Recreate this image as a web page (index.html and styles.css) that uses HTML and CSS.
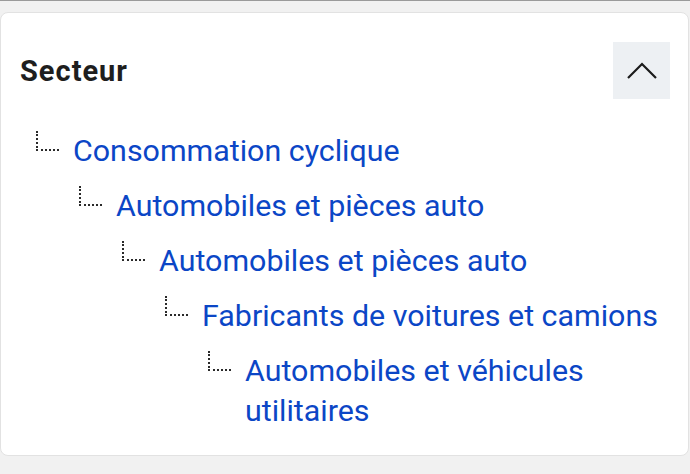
FILE: index.html
```html
<!DOCTYPE html>
<html lang="fr">
<head>
  <meta charset="UTF-8" />
  <meta name="viewport" content="width=device-width, initial-scale=1" />
  <title>Secteur</title>
  <link rel="stylesheet" href="styles.css">
</head>
<body>

<div class="topline"></div>

<section class="card">
  <div class="card-head">
    <h2>Secteur</h2>
    <button class="toggle" aria-label="Réduire">
      <svg width="32" height="20" viewBox="0 0 32 20">
        <polyline points="2,17 16,3 30,17" fill="none" stroke="#1b1b1b" stroke-width="2.2" />
      </svg>
    </button>
  </div>

  <!-- arbre des secteurs -->
  <ul class="tree">
    <li>
      <div class="node"><span class="branch"></span><a href="#">Consommation cyclique</a></div>
      <ul>
        <li>
          <div class="node"><span class="branch"></span><a href="#">Automobiles et pièces auto</a></div>
          <ul>
            <li>
              <div class="node"><span class="branch"></span><a href="#">Automobiles et pièces auto</a></div>
              <ul>
                <li>
                  <div class="node"><span class="branch"></span><a href="#">Fabricants de voitures et camions</a></div>
                  <ul>
                    <li>
                      <div class="node"><span class="branch"></span><a href="#">Automobiles et véhicules utilitaires</a></div>
                    </li>
                  </ul>
                </li>
              </ul>
            </li>
          </ul>
        </li>
      </ul>
    </li>
  </ul>
</section>

</body>
</html>
```

FILE: styles.css
```css
* { box-sizing: border-box; }
body {
  font-family: Roboto, 'Liberation Sans', sans-serif;
  margin: 0;
  background-color: #f1f1f1;
}
.topline {
  height: 1px;
  background-color: #9a9a9a;
}
.card {
  background-color: #fff;
  margin: 11px 1px 0 0;
  border: 1px solid #e2e2e2;
  border-radius: 8px;
  padding: 0 0 24px 0;
}
.card-head {
  display: flex;
  justify-content: space-between;
  align-items: center;
  padding: 29px 18px 0 19px;
}
.card-head h2 {
  margin: 0;
  font-size: 29px;
  font-weight: 700;
  letter-spacing: 1px;
  color: #1e1e1e;
}
.toggle {
  width: 57px;
  height: 57px;
  border: none;
  background-color: #edf0f3;
  display: flex;
  align-items: center;
  justify-content: center;
  padding: 0;
}
.tree, .tree ul {
  list-style: none;
  margin: 0;
  padding: 0;
}
.tree {
  padding: 32px 20px 0 35px;
}
.tree ul {
  padding-left: 43px;
  margin-top: 15px;
}
.node {
  display: flex;
  align-items: flex-start;
}
.branch {
  flex: none;
  width: 23px;
  height: 20px;
  margin-right: 14px;
  border-left: 2px dotted #2a2a2a;
  border-bottom: 2px dotted #2a2a2a;
}
.node a {
  color: #0b46c6;
  text-decoration: none;
  font-size: 30.4px;
  line-height: 40px;
}
```
